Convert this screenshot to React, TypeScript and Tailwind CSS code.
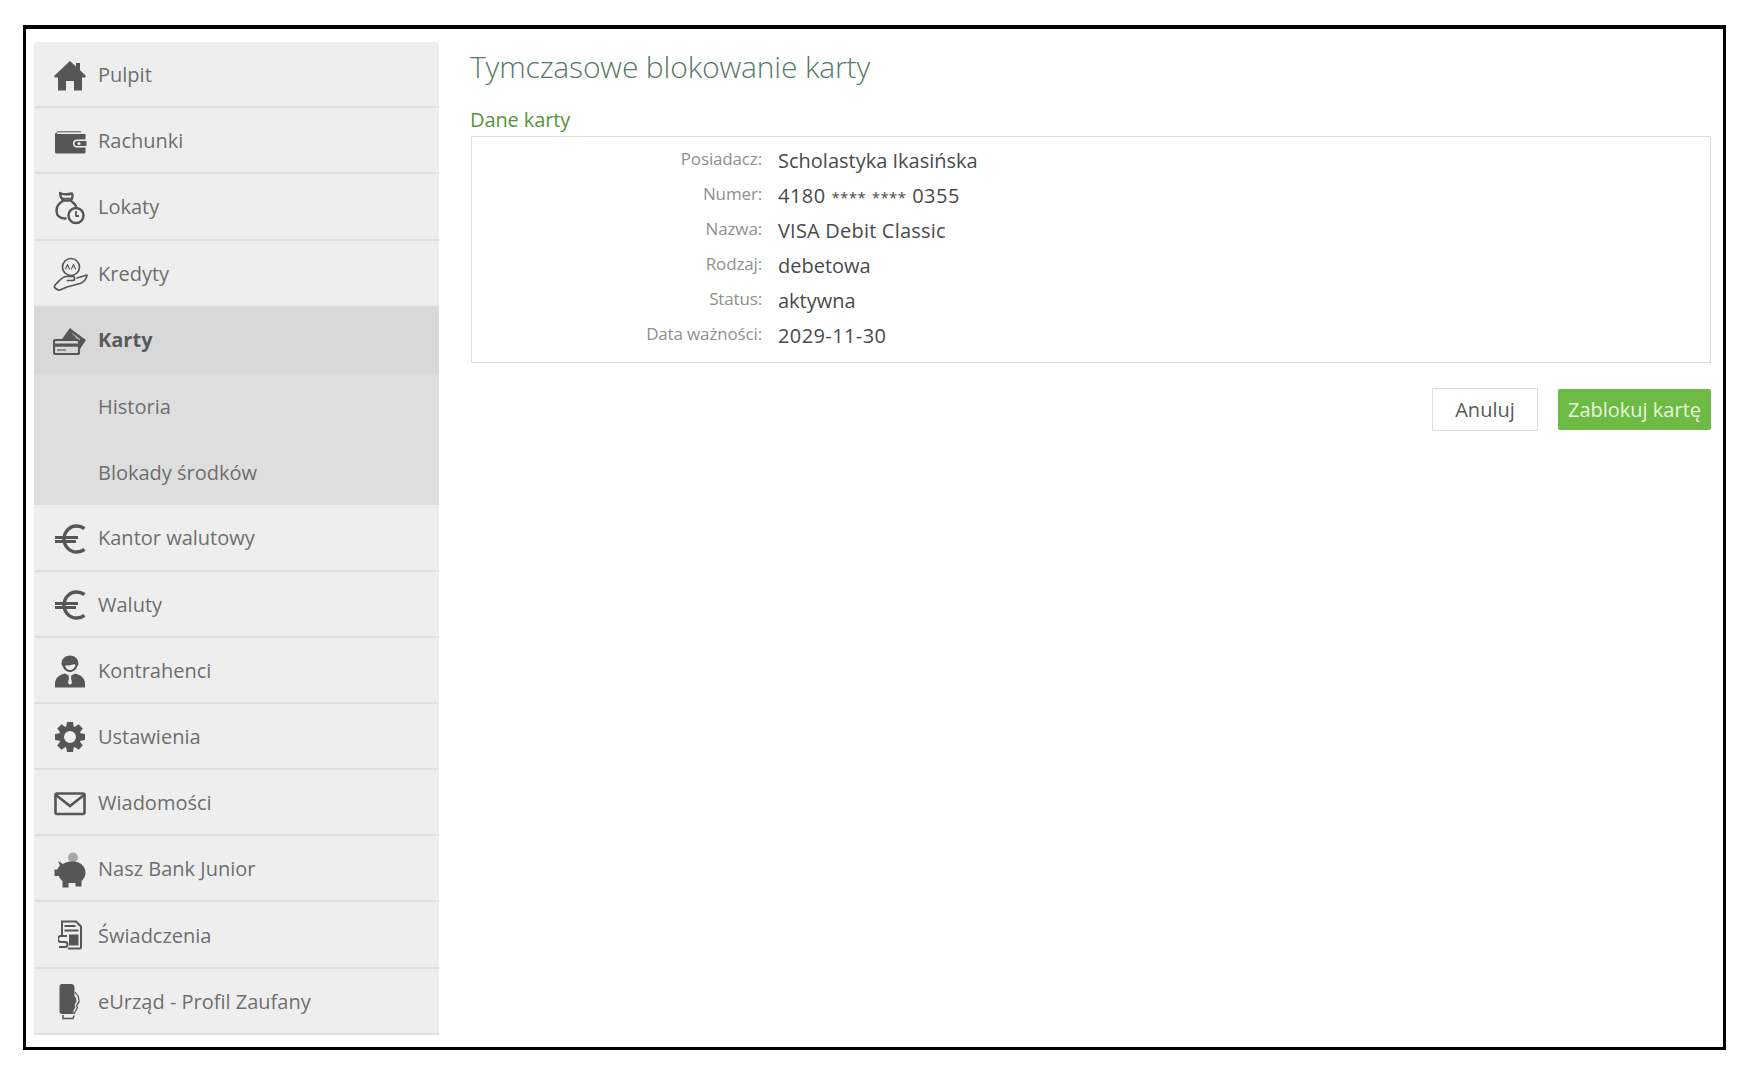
import React from "react";

const c = "#565656";

const Home = () => (
  <svg width="32" height="30" viewBox="0 0 32 30" fill={c}>
    <path d="M16 0l6 5.500V2h4v7.200L32 15l-1 1.500h-3V29.500h-8V20h-8v9.500H4V16.500H1L0 15z" />
  </svg>
);
const Wallet = () => (
  <svg width="33" height="24" viewBox="0 0 33 24" fill={c}>
    <path d="M3 1h24v1.500H3z" opacity=".7" />
    <path d="M1 4a2 2 0 0 1 2-1.500V4h28.500v5.500H23a4 4 0 0 0 0 8h8.500V22a1.500 1.500 0 0 1-1.500 1.500H2.500A1.500 1.500 0 0 1 1 22z" />
    <path d="M23 11h9.500v5H23a2.500 2.500 0 0 1 0-5z" />
    <circle cx="25" cy="13.500" r="1.500" fill="#eeeeee" />
  </svg>
);
const Bag = () => (
  <svg width="30" height="34" viewBox="0 0 30 34" fill="none" stroke={c} strokeWidth="2.400" strokeLinejoin="round">
    <path d="M5 2c4 2 8 1.500 12 .5 1 2 .5 4.500-1 7H8C6 7 5 4.500 5 2z" />
    <path d="M6 7.500h11" strokeWidth="1.500" />
    <path d="M8 10C4 12 1.500 16 1.500 20c0 4.500 3.500 7.500 8 7.500h2" />
    <path d="M16 10c2.500 1.500 4.500 3.500 5.500 6" />
    <circle cx="21" cy="24.500" r="7.500" />
    <path d="M21 20v5h3" strokeWidth="1.800" />
  </svg>
);
const HandCoin = () => (
  <svg width="36" height="34" viewBox="0 0 36 34" fill="none" stroke={c} strokeWidth="1.700" strokeLinejoin="round" strokeLinecap="round">
    <circle cx="19" cy="10" r="8.500" />
    <path d="M13.500 12l2-4.500 2 4.500M19.500 12l2-4.500 2 4.500" strokeWidth="1.100" />
    <path d="M25 21l10-3c-.5 3.500-3 7-7 8.500l-13 3.500-7 3c-2 .5-3-.5-5-2-1-1 0-3 1-4 3-3 6-7 10-7.500h7c2 0 2.500 4-.5 4h-5" />
  </svg>
);
const Cards = () => (
  <svg width="34" height="30" viewBox="0 0 34 30" fill={c}>
    <path d="M9 13L17 2l3 2.500 13 9.500-6 9V13z" />
    <path d="M18 6l9 7h-3z" fill="#b9b9b9" />
    <rect x="1" y="14" width="25" height="14" rx="1.500" fill="none" stroke={c} strokeWidth="2.200" />
    <rect x="1" y="17.500" width="25" height="3.200" />
    <path d="M4 24h9" stroke={c} strokeWidth="1.200" />
  </svg>
);
const Euro = () => (
  <svg width="32" height="30" viewBox="0 0 32 30" fill="none" stroke={c} strokeWidth="3.400">
    <path d="M30.500 4.500C27.500 2.500 25 2 22.500 2 15.500 2 10 8 10 15s5.500 13 12.500 13c2.500 0 5-.5 8-2.500" />
    <path d="M1 13.500h23M1 17.500h21" strokeWidth="2.800" />
  </svg>
);
const Person = () => (
  <svg width="30" height="33" viewBox="0 0 30 33" fill={c}>
    <path d="M6.500 9c0-5 3.500-8.500 8.500-8.500S23.500 4 23.500 9c0 .8-.5 1.500-1 1.700C21.500 14.500 18.500 17 15 17s-6.500-2.500-7.500-6.300C7 10.500 6.500 9.800 6.500 9z" />
    <path d="M10 10.500c2.500 0 7 0 9.500-1.500.5.500 1 1 1 1.500-1 2.500-3 4.500-5.500 4.500s-4.500-2-5-4.500z" fill="#eeeeee" />
    <path d="M9.500 18.500L15 21l5.500-2.500c5.500 1.500 9 4.500 9.500 9.500v4.500H0V28c.5-5 4-8 9.500-9.500z" />
    <path d="M13.500 20.500h3l-.5 2.500 1 5-2 2-2-2 1-5z" fill="#eeeeee" />
  </svg>
);
const Gear = () => (
  <svg width="30" height="30" viewBox="0 0 30 30" fill={c}>
    {[0, 45, 90, 135, 180, 225, 270, 315].map((a) => (
      <path key={a} d="M12 0h6l1 6h-8z" transform={`rotate(${a} 15 15)`} />
    ))}
    <circle cx="15" cy="15" r="8.500" fill="none" stroke={c} strokeWidth="5" />
  </svg>
);
const Envelope = () => (
  <svg width="32" height="24" viewBox="0 0 32 24" fill="none" stroke={c} strokeWidth="2.600">
    <rect x="1.500" y="1.500" width="29" height="20.500" rx="1.500" />
    <path d="M2 3l14 11L30 3" />
  </svg>
);
const Piggy = () => (
  <svg width="32" height="36" viewBox="0 0 32 36" fill={c}>
    <circle cx="19" cy="5.500" r="5" fill="#a8a8a8" />
    <path d="M4 9l5 3c3-2 6-2.500 10-2.500 7 0 12.500 4.500 12.500 11 0 3.500-1.500 6.500-4 8.500v5.500h-6V31h-7v4.500H8.500V29c-2-1.500-3-3-3.500-5H.5v-6.500h3c.5-1.500 1.500-3 2.500-4z" />
  </svg>
);
const Benefit = () => (
  <svg width="24" height="32" viewBox="0 0 24 32" fill={c}>
    <path d="M4 1.500h14l5 5V27a1.500 1.500 0 0 1-1.500 1.500H4z" fill="none" stroke={c} strokeWidth="2" />
    <path d="M6.500 5h11v2h-11zM6.500 9.500h14v2h-14z" />
    <rect x="0" y="15" width="10" height="15" fill="#eeeeee" />
    <path d="M9 16H3a1.500 1.500 0 0 0 0 6h4a1.500 1.500 0 0 1 0 5H1" fill="none" stroke={c} strokeWidth="2" />
    <rect x="11" y="14.500" width="9.500" height="11" />
  </svg>
);
const Phone = () => (
  <svg width="22" height="38" viewBox="0 0 22 38" fill={c}>
    <path d="M3 1h9c2.500 0 3.500 1.500 3.500 3.500V13l1.500 2 .5 3.500L15.500 22l1 2-2 3.500v3.500H3c-1.500 0-2.500-1-2.500-2.500V3.500C.5 2 1.500 1 3 1z" />
    <path d="M16 9l3.500 5 .5 5-2.500 3.500 1 2-3.500 6.500" fill="none" stroke={c} strokeWidth="1.300" />
    <path d="M4 32v3.500h10l1-3" fill="none" stroke={c} strokeWidth="1.500" />
  </svg>
);

type Row = { label: string; icon?: React.ReactNode; tone?: "active" | "sub" };

const rows: Row[] = [
  { label: "Pulpit", icon: <Home /> },
  { label: "Rachunki", icon: <Wallet /> },
  { label: "Lokaty", icon: <Bag /> },
  { label: "Kredyty", icon: <HandCoin /> },
  { label: "Karty", icon: <Cards />, tone: "active" },
  { label: "Historia", tone: "sub" },
  { label: "Blokady środków", tone: "sub" },
  { label: "Kantor walutowy", icon: <Euro /> },
  { label: "Waluty", icon: <Euro /> },
  { label: "Kontrahenci", icon: <Person /> },
  { label: "Ustawienia", icon: <Gear /> },
  { label: "Wiadomości", icon: <Envelope /> },
  { label: "Nasz Bank Junior", icon: <Piggy /> },
  { label: "Świadczenia", icon: <Benefit /> },
  { label: "eUrząd - Profil Zaufany", icon: <Phone /> },
];

const details: [string, React.ReactNode, string][] = [
  ["Posiadacz:", "Scholastyka Ikasińska", "tracking-normal"],
  [
    "Numer:",
    <>
      4180 <span className="text-[15px] tracking-[0.4px]">****</span> <span className="text-[15px] tracking-[0.4px]">****</span> 0355
    </>,
    "tracking-[0.5px]",
  ],
  ["Nazwa:", "VISA Debit Classic", "tracking-[0.2px]"],
  ["Rodzaj:", "debetowa", "tracking-normal"],
  ["Status:", "aktywna", "tracking-normal"],
  ["Data ważności:", "2029-11-30", "tracking-[0.4px]"],
];

export default function App() {
  return (
    <div className="w-[1748px] h-[1068px] bg-white pt-[25px] pl-[23px] font-['Open_Sans',sans-serif]">
      <div className="w-[1703px] h-[1025px] border-[3px] border-t-4 border-black flex gap-[31px] pt-[13px] pl-[8px] pr-[12px]">
        <nav className="w-[405px] shrink-0 h-fit rounded-t-[3px] overflow-hidden">
          {rows.map((r) => (
            <div
              key={r.label}
              className={
                r.tone === "active"
                  ? "h-[66.2px] flex items-center bg-[#d8d8d8]"
                  : r.tone === "sub"
                  ? "h-[66.2px] flex items-center bg-[#dedede]"
                  : "h-[66.2px] flex items-center bg-[#eeeeee] border-b-2 border-[#e0e0e0]"
              }
            >
              <div className="w-[64px] shrink-0 flex justify-center pl-[8px] pt-[3px]">{r.icon}</div>
              <span
                className={
                  r.tone === "active"
                    ? "text-[20px] font-bold text-[#5a5a5a]"
                    : "text-[20px] font-normal text-[#6e6e6e] translate-y-[1px]"
                }
              >
                {r.label}
              </span>
            </div>
          ))}
        </nav>
        <main className="flex-1 min-w-0">
          <h1 className="text-[30px] leading-[40px] font-light text-[#557a66] mt-[5px] tracking-[-0.15px]">Tymczasowe blokowanie karty</h1>
          <h2 className="text-[20px] leading-[26px] font-normal text-[#55963a] mt-[20px] tracking-[-0.1px]">Dane karty</h2>
          <div className="border border-[#dddddd] h-[227px] mt-[3px] ml-[1px] pt-[5px]">
            {details.map(([k, v, t]) => (
              <div key={k} className="flex items-center h-[35px]">
                <span className="w-[290px] text-right text-[17px] font-normal text-[#8f8f8f] tracking-[-0.15px] -translate-y-[1px]">{k}</span>
                <span className={`ml-[16px] text-[20px] text-[#4a4a4a] translate-y-[1px] ${t}`}>{v}</span>
              </div>
            ))}
          </div>
          <div className="flex justify-end gap-[20px] mt-[25px]">
            <button className="w-[106px] h-[43px] border border-[#dddddd] bg-white text-[20px] text-[#5a5a5a]">Anuluj</button>
            <button className="w-[153px] h-[41px] mt-[1px] rounded-[2px] bg-[#6dbb45] text-[20px] text-[#e8f7d8]">Zablokuj kartę</button>
          </div>
        </main>
      </div>
    </div>
  );
}
